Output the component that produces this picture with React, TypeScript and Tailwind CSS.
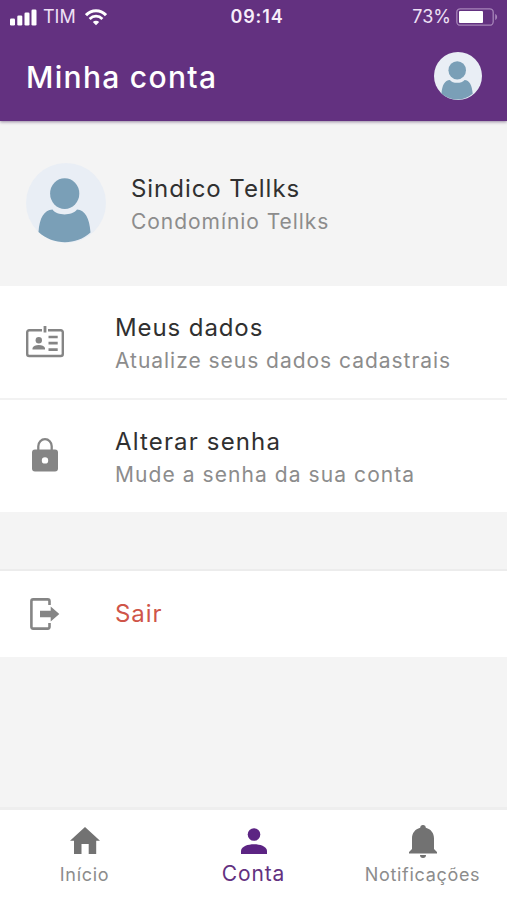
import type { ReactNode } from 'react';

function Avatar({ className }: { className: string }) {
  return (
    <svg viewBox="0 0 80 80" className={className}>
      <circle cx="40" cy="40" r="40" fill="#e9eef5" />
      <ellipse cx="38.7" cy="30.6" rx="14.6" ry="15.3" fill="#7a9fb7" />
      <path
        d="M26.5 46.5C31 53 46 53 51 46.5C59 47 63.5 55 64.5 69.5C50 82.5 27.5 82.5 12.5 69C13.5 55 18 47 26.5 46.5Z"
        fill="#7a9fb7"
      />
    </svg>
  );
}

function IdCardIcon() {
  return (
    <svg viewBox="0 0 38 32" className="w-[38px] h-8" fill="none">
      <path
        d="M16 4.2H3.2A2 2 0 0 0 1.2 6.200V28A2 2 0 0 0 3.2 30H34.8A2 2 0 0 0 36.8 28V6.200A2 2 0 0 0 34.8 4.200H22"
        stroke="#858585"
        strokeWidth="2.400"
      />
      <path d="M19 0V6.500" stroke="#858585" strokeWidth="2.800" />
      <circle cx="12.800" cy="14.200" r="3.200" fill="#858585" />
      <path d="M6.500 23.500V22C7.500 18 18 18 19 22V23.500Z" fill="#858585" />
      <path d="M22.500 11H31.700M22.500 17.200H31.700M22.500 23.700H31.700" stroke="#858585" strokeWidth="2.700" />
    </svg>
  );
}

function LockIcon() {
  return (
    <svg viewBox="0 0 26 34" className="w-[26px] h-[34px] mb-[2px]" fill="none">
      <path d="M6.300 13V8.200a6.700 7 0 0 1 13.400 0V13" stroke="#858585" strokeWidth="2.300" />
      <path
        fillRule="evenodd"
        fill="#858585"
        d="M3 11.500H23a3 3 0 0 1 3 3V30.500a3 3 0 0 1-3 3H3a3 3 0 0 1-3-3V14.500a3 3 0 0 1 3-3ZM13 19.200a3.200 3.200 0 1 0 0 6.400a3.200 3.200 0 1 0 0-6.400Z"
      />
    </svg>
  );
}

function ExitIcon() {
  return (
    <svg viewBox="0 0 30 32" className="w-[30px] h-8" fill="none">
      <path
        d="M19.500 7V3.200A1.800 1.800 0 0 0 17.700 1.400H3.200A1.800 1.800 0 0 0 1.400 3.200V28.800A1.800 1.800 0 0 0 3.200 30.600H17.700A1.800 1.800 0 0 0 19.500 28.800V25"
        stroke="#858585"
        strokeWidth="2.600"
      />
      <path d="M10 12.700H20.700V8.500L29.300 16L20.700 23.500V19.200H10Z" fill="#858585" />
    </svg>
  );
}

function Row({ icon, children }: { icon: ReactNode; children: ReactNode }) {
  return (
    <>
      <div className="w-[90px] shrink-0 flex justify-center">{icon}</div>
      <div className="ml-[25px]">{children}</div>
    </>
  );
}

export default function App() {
  return (
    <div className="w-[507px] h-[900px] flex flex-col bg-[#f4f4f4] overflow-hidden font-['Inter','Liberation_Sans',sans-serif] whitespace-nowrap">
      {/* Header */}
      <header className="h-[121px] shrink-0 bg-[#633180] text-white shadow-[0_1px_3px_rgba(60,30,80,0.5)]">
        <div className="h-[34px] pl-2.5 pr-[9px] grid grid-cols-3 items-center text-[18px] leading-[34px]">
          <div className="flex items-center">
            <svg viewBox="0 0 27 17" className="w-[27px] h-[17px]" fill="#fff">
              <rect x="0" y="9.500" width="5" height="7" rx="1.300" />
              <rect x="7.300" y="6.500" width="5" height="10" rx="1.300" />
              <rect x="14.500" y="3.500" width="5" height="13" rx="1.300" />
              <rect x="21.500" y="0.500" width="5" height="16" rx="1.300" />
            </svg>
            <span className="ml-[6px] w-[33px] text-[#eee0f5]">TIM</span>
            <svg viewBox="0 0 22 17" className="ml-[9px] w-[22px] h-[17px]" fill="none" stroke="#fff">
              <path d="M1 6.200C6.500 0.300 15.500 0.300 21 6.200" strokeWidth="3" />
              <path d="M4.600 10C8.400 6.200 13.600 6.200 17.400 10" strokeWidth="2.800" />
              <path d="M7.800 13C9.700 11.200 12.300 11.200 14.200 13L11 16.300Z" fill="#fff" stroke="none" />
            </svg>
          </div>
          <span className="pl-[6px] text-center font-semibold tracking-[0.9px] text-[#f6edfa]">09:14</span>
          <div className="flex items-center justify-end">
            <span className="text-[#eee0f5]">73%</span>
            <svg viewBox="0 0 42 18" className="ml-[5px] w-[42px] h-[18px]" fill="none">
              <rect x="0.800" y="0.800" width="36.400" height="16.400" rx="3.500" stroke="#a684b8" strokeWidth="1.300" />
              <rect x="3" y="3" width="24" height="12" rx="1" fill="#fff" />
              <path d="M39.200 6V12C41.800 11 41.800 7 39.200 6Z" fill="#a684b8" />
            </svg>
          </div>
        </div>
        <div className="h-[87px] pl-[26px] pr-[25px] flex items-center justify-between">
          <h1 className="text-[30px] font-medium tracking-[1.3px]">Minha conta</h1>
          <Avatar className="w-12 h-12 mb-[4px]" />
        </div>
      </header>

      {/* Profile */}
      <section className="h-[165px] shrink-0 flex items-center pl-[26px]">
        <Avatar className="w-20 h-20 mb-[2px]" />
        <div className="ml-[25px] pt-[3px]">
          <p className="text-[24px] leading-8 tracking-[0.95px] text-[#303030]">Sindico Tellks</p>
          <p className="text-[21px] leading-[33px] tracking-[0.95px] text-[#8c8c8c]">Condomínio Tellks</p>
        </div>
      </section>

      {/* Account options */}
      <div className="h-[114px] shrink-0 flex items-center bg-white border-b-2 border-[#f2f2f2]">
        <Row icon={<IdCardIcon />}>
          <p className="mt-[5px] text-[24px] leading-8 tracking-[0.9px] text-[#303030]">Meus dados</p>
          <p className="text-[21px] leading-[33px] tracking-[0.97px] text-[#8c8c8c]">Atualize seus dados cadastrais</p>
        </Row>
      </div>
      <div className="h-[112px] shrink-0 flex items-center bg-white">
        <Row icon={<LockIcon />}>
          <p className="mt-[5px] text-[24px] leading-8 tracking-[1.15px] text-[#303030]">Alterar senha</p>
          <p className="text-[21px] leading-[33px] tracking-[1.07px] text-[#8c8c8c]">Mude a senha da sua conta</p>
        </Row>
      </div>

      {/* Logout */}
      <div className="mt-[57px] h-[88px] shrink-0 flex items-center bg-white border-t-2 border-[#ececec]">
        <Row icon={<ExitIcon />}>
          <p className="text-[24px] leading-8 tracking-[0.9px] text-[#cf5549]">Sair</p>
        </Row>
      </div>

      {/* Bottom navigation */}
      <nav className="mt-auto h-[93px] shrink-0 grid grid-cols-3 bg-white border-t-3 border-[#eeeeee] text-[18px] text-[#8c8c8c]">
        <a className="flex flex-col items-center pt-[17px]">
          <svg viewBox="0 0 30 27" className="w-[30px] h-[27px]" fill="#727272">
            <path d="M15 0L30 13.700H26.200V27H18.700V17H11.500V27H4V13.700H0Z" />
          </svg>
          <span className="mt-[9px] leading-6 tracking-[0.7px]">Início</span>
        </a>
        <a className="flex flex-col items-center pt-[18px] text-[#633180]">
          <svg viewBox="0 0 26 26" className="w-[26px] h-[26px]" fill="#5c2483">
            <circle cx="13" cy="6.500" r="6.300" />
            <path d="M0 26V22.500C1.500 14.300 24.500 14.300 26 22.500V26Z" />
          </svg>
          <span className="mt-[8px] leading-6 text-[21px] tracking-[0.9px]">Conta</span>
        </a>
        <a className="flex flex-col items-center pt-[15px]">
          <svg viewBox="0 0 28 33" className="w-[28px] h-[33px]" fill="#727272">
            <path d="M14 0A2.700 2.700 0 0 1 16.800 2.800C22 4.200 25 8.200 25 13.500V24L28 27V28.500H0V27L3 24V13.500C3 8.200 6 4.200 11.200 2.800A2.700 2.700 0 0 1 14 0Z" />
            <path d="M11 30H17A3 3 0 0 1 11 30Z" />
          </svg>
          <span className="mt-[5px] leading-6 tracking-[0.7px]">Notificações</span>
        </a>
      </nav>
    </div>
  );
}
